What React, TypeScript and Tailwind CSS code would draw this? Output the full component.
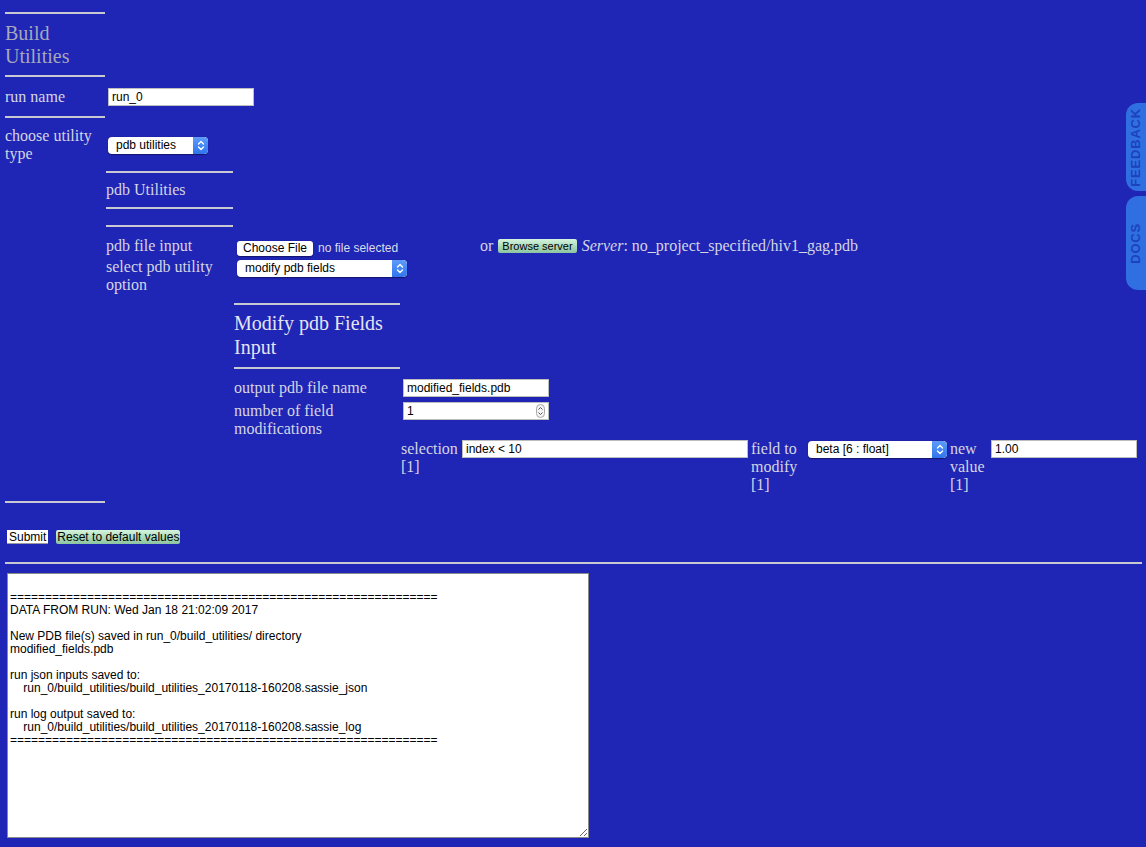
import React from 'react';

const serif = "font-['Liberation_Serif','Times_New_Roman',serif]";
const sans = "font-['Liberation_Sans',Arial,sans-serif]";

const Rule = ({ w }: { w: string }) => <div className={`h-[2px] bg-[#c9c9d3] ${w}`} />;

const Chevrons = () => (
    <svg width="8" height="11" viewBox="0 0 8 11" fill="none" stroke="white" strokeWidth="1.4" strokeLinecap="round" strokeLinejoin="round">
        <path d="M1.5 4 L4 1.5 L6.5 4" />
        <path d="M1.5 7 L4 9.5 L6.5 7" />
    </svg>
);

const FakeSelect = ({ label, w }: { label: string; w: string }) => (
    <div className={`flex h-[17px] items-stretch rounded-[4px] bg-white overflow-hidden shadow-[0_0.5px_1px_rgba(0,0,0,0.4)] ${w}`}>
        <span className={`flex-1 pl-[8px] text-[12px] leading-[17px] text-black ${sans}`}>{label}</span>
        <span className="w-[15px] flex items-center justify-center bg-gradient-to-b from-[#5d9cf8] to-[#2f74ee] rounded-r-[4px]">
            <Chevrons />
        </span>
    </div>
);

const TextBox = ({ value, w }: { value: string; w: string }) => (
    <div className={`h-[18px] bg-white border border-[#bdbdbd] pl-[3px] text-[12px] leading-[16px] text-black ${sans} ${w}`}>{value}</div>
);

const GreenButton = ({ children, size = 'text-[11px] px-[4px]' }: { children: React.ReactNode; size?: string }) => (
    <span className={`inline-block h-[14px] rounded-[2px] bg-gradient-to-b from-[#d4f4dc] to-[#8cc4a0] leading-[14px] text-black ${size} ${sans}`}>
        {children}
    </span>
);

const output = `
=============================================================
DATA FROM RUN: Wed Jan 18 21:02:09 2017

New PDB file(s) saved in run_0/build_utilities/ directory
modified_fields.pdb

run json inputs saved to:
    run_0/build_utilities/build_utilities_20170118-160208.sassie_json

run log output saved to:
    run_0/build_utilities/build_utilities_20170118-160208.sassie_log
=============================================================`;

const App: React.FC = () => {
    return (
        <div className={`relative min-h-screen bg-[#1f25b5] pl-[5px] pr-[4px] pt-[12px] pb-[8px] text-[16px] leading-[18px] text-[#d5d5e3] ${serif}`}>
            {/* side tabs */}
            <div className="absolute right-0 top-[103px] w-[20px] h-[88px] rounded-l-[12px] bg-[#2f6fe2] flex items-center justify-center">
                <span className={`[writing-mode:vertical-rl] rotate-180 text-[13px] font-bold tracking-[0.8px] text-[#1d42bd] ${sans}`}>FEEDBACK</span>
            </div>
            <div className="absolute right-0 top-[196px] w-[20px] h-[94px] rounded-l-[12px] bg-[#2f6fe2] flex items-center justify-center">
                <span className={`[writing-mode:vertical-rl] rotate-180 text-[13px] font-bold tracking-[0.8px] text-[#1d42bd] ${sans}`}>DOCS</span>
            </div>

            <Rule w="w-[100px]" />
            <h2 className="mt-[8px] text-[20px] leading-[23px] text-[#a7a7b9] w-[100px]">Build Utilities</h2>
            <div className="mt-[7px]"><Rule w="w-[100px]" /></div>

            {/* run name */}
            <div className="mt-[11px] flex items-center">
                <div className="w-[103px]">run name</div>
                <TextBox value="run_0" w="w-[146px]" />
            </div>
            <div className="mt-[10px]"><Rule w="w-[100px]" /></div>

            {/* utility type */}
            <div className="mt-[9px] flex items-center">
                <div className="w-[100px]">choose utility type</div>
                <div className="ml-[3px]"><FakeSelect label="pdb utilities" w="w-[100px]" /></div>
            </div>

            <div className="ml-[101px]">
                <div className="mt-[8px]"><Rule w="w-[127px]" /></div>
                <div className="mt-[8px]">pdb Utilities</div>
                <div className="mt-[8px]"><Rule w="w-[127px]" /></div>
                <div className="mt-[16px]"><Rule w="w-[127px]" /></div>

                <div className="mt-[10px] flex items-start">
                    <div className="w-[131px]">pdb file input</div>
                    <div className="w-[238px] flex items-center gap-[5px] mt-[2px]">
                        <span className={`h-[15px] px-[6px] rounded-[3px] bg-white text-[12px] leading-[15px] text-black shadow-[0_0.5px_1px_rgba(0,0,0,0.4)] ${sans}`}>Choose File</span>
                        <span className={`text-[12px] text-[#dcdcea] ${sans}`}>no file selected</span>
                    </div>
                    <div className="flex items-center gap-[5px]">
                        <span className="ml-[5px]">or</span>
                        <GreenButton>Browse server</GreenButton>
                        <span><i>Server</i>: no_project_specified/hiv1_gag.pdb</span>
                    </div>
                </div>

                <div className="mt-[1px] flex items-start">
                    <div className="w-[128px]">select pdb utility option</div>
                    <div className="ml-[3px] mt-[2px]"><FakeSelect label="modify pdb fields" w="w-[170px]" /></div>
                </div>

                <div className="ml-[128px]">
                    <div className="mt-[9px]"><Rule w="w-[166px]" /></div>
                    <h3 className="mt-[6px] w-[166px] text-[20px] leading-[24px] text-[#e4e4f2]">Modify pdb Fields Input</h3>
                    <div className="mt-[8px]"><Rule w="w-[166px]" /></div>

                    <div className="mt-[10px] flex items-start">
                        <div className="w-[169px]">output pdb file name</div>
                        <TextBox value="modified_fields.pdb" w="w-[146px]" />
                    </div>
                    <div className="mt-[5px] flex items-start">
                        <div className="w-[169px]">number of field modifications</div>
                        <div className={`h-[18px] w-[146px] bg-white border border-[#bdbdbd] pl-[3px] flex items-center justify-between text-[12px] text-black ${sans}`}>
                            <span>1</span>
                            <svg width="9" height="14" viewBox="0 0 9 14" className="mr-[3px]">
                                <rect x="0.5" y="0.5" width="8" height="13" rx="4" fill="#f4f4f4" stroke="#a8a8a8" />
                                <path d="M2.5 5.5 L4.5 3.5 L6.5 5.5" fill="none" stroke="#555" strokeWidth="1" />
                                <path d="M2.5 8.5 L4.5 10.5 L6.5 8.5" fill="none" stroke="#555" strokeWidth="1" />
                            </svg>
                        </div>
                    </div>

                    <div className="mt-[2px] ml-[167px] flex items-start">
                        <div className="w-[61px]">selection [1]</div>
                        <TextBox value="index < 10" w="w-[286px]" />
                        <div className="ml-[3px] w-[57px]">field to modify [1]</div>
                        <div className="mt-[1px]"><FakeSelect label="beta [6 : float]" w="w-[139px]" /></div>
                        <div className="ml-[3px] w-[41px]">new value [1]</div>
                        <TextBox value="1.00" w="w-[146px]" />
                    </div>
                </div>
            </div>

            <div className="mt-[7px]"><Rule w="w-[100px]" /></div>

            <div className="mt-[27px] ml-[2px] flex items-center gap-[8px]">
                <span className={`h-[14px] px-[2px] bg-white border-b border-[#999] text-[12px] leading-[14px] text-black ${sans}`}>Submit</span>
                <GreenButton size="text-[12px] px-[1px]">Reset to default values</GreenButton>
            </div>

            <div className="mt-[18px]"><Rule w="w-full" /></div>

            <textarea
                readOnly
                defaultValue={output}
                className={`mt-[9px] ml-[2px] block w-[582px] h-[265px] bg-white border border-[#8a8a8a] px-[2px] pt-[4px] text-[12px] leading-[13px] text-black whitespace-pre overflow-hidden ${sans}`}
            />
        </div>
    );
};

export default App;
